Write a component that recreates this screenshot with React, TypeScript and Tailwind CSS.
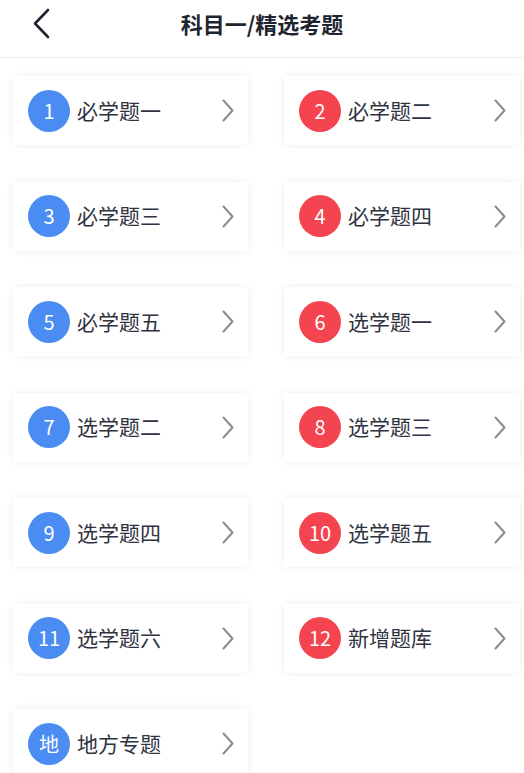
type Item = { badge: string; label: string; red?: boolean };

const items: Item[] = [
  { badge: "1", label: "必学题一" },
  { badge: "2", label: "必学题二", red: true },
  { badge: "3", label: "必学题三" },
  { badge: "4", label: "必学题四", red: true },
  { badge: "5", label: "必学题五" },
  { badge: "6", label: "选学题一", red: true },
  { badge: "7", label: "选学题二" },
  { badge: "8", label: "选学题三", red: true },
  { badge: "9", label: "选学题四" },
  { badge: "10", label: "选学题五", red: true },
  { badge: "11", label: "选学题六" },
  { badge: "12", label: "新增题库", red: true },
  { badge: "地", label: "地方专题" },
];

function Card({ item }: { item: Item }) {
  return (
    <div className="flex h-[69px] items-center bg-white pl-[15px] pr-[14px] shadow-[0_0_8px_rgba(0,0,0,0.07)]">
      <div
        className={`flex h-[42px] w-[42px] shrink-0 items-center justify-center rounded-full text-[20px] text-white ${
          item.red ? "bg-[#f3444f]" : "bg-[#4a8cf1]"
        }`}
      >
        {item.badge}
      </div>
      <span className="ml-[7px] flex-1 text-[21px] text-[#2f3340]">{item.label}</span>
      {/* chevron */}
      <svg width="12" height="23" viewBox="0 0 12 23" fill="none" stroke="#8c8c8c" strokeWidth="2" strokeLinecap="round" strokeLinejoin="round">
        <path d="M1.5 1.5 L10.5 11.5 L1.5 21.5" />
      </svg>
    </div>
  );
}

export default function App() {
  return (
    <div
      className="min-h-[773px] bg-white"
      style={{ fontFamily: '"Noto Sans CJK SC", "Noto Sans", sans-serif' }}
    >
      <header className="relative flex h-[58px] items-center justify-center border-b border-[#ececec]">
        <svg
          className="absolute left-[31px] top-[8px]"
          width="20"
          height="31"
          viewBox="0 0 20 31"
          fill="none"
          stroke="#1f2430"
          strokeWidth="2.6"
          strokeLinecap="round"
          strokeLinejoin="round"
        >
          <path d="M17 2 L4 15.5 L17 29" />
        </svg>
        <h1 className="-mt-[10px] text-[22px] font-bold text-[#1f2430]">科目一/精选考题</h1>
      </header>
      <div className="grid grid-cols-[235px_236px] gap-x-[36px] gap-y-[36.5px] pl-[13px] pt-[18px]">
        {items.map((it) => (
          <Card key={it.badge} item={it} />
        ))}
      </div>
    </div>
  );
}
